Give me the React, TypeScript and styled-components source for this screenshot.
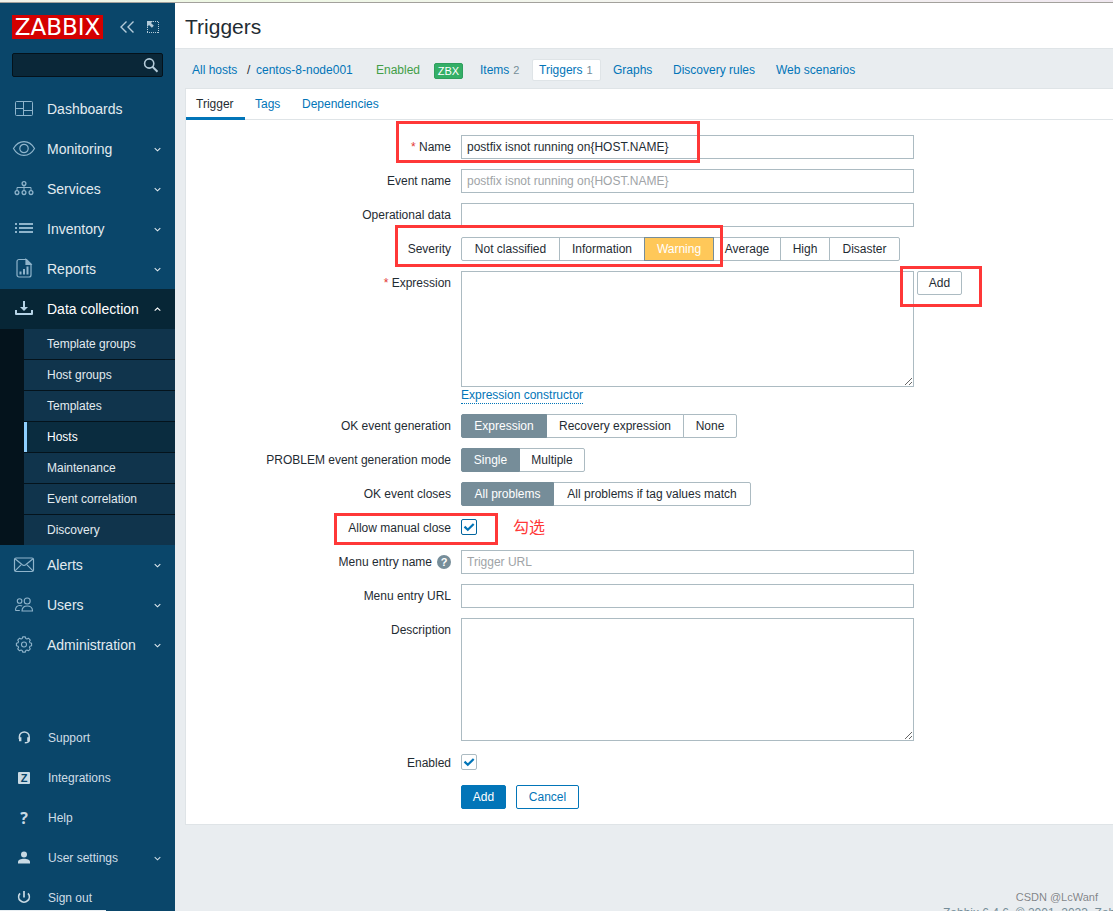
import React from "react";
import styled, { createGlobalStyle, css } from "styled-components";

const c = {
  sidebar: "#0a466a",
  sidebarText: "#e2ebf0",
  icon: "#8fb4cb",
  page: "#e9edf0",
  line: "#dfe4e7",
  border: "#acbbc2",
  text: "#1f2c33",
  link: "#0275b8",
  muted: "#768d99",
  mark: "#ff3838",
};

const GlobalStyle = createGlobalStyle`
  *, *::before, *::after { box-sizing: border-box; }
  body {
    margin: 0;
    background: ${c.page};
    color: ${c.text};
    font: 12px/16px "Liberation Sans", Arial, sans-serif;
  }
  button, input, textarea { font: inherit; color: inherit; }
  a { color: ${c.link}; text-decoration: none; }
`;

const Screen = styled.div`
  position: relative;
  height: 100vh;
  overflow: hidden;
  display: flex;
  flex-direction: column;
`;

const TopStrip = styled.div`
  flex: none;
  height: 3px;
  background: linear-gradient(90deg, #f2f2ea, #eef8e4 20%, #f4f4f0 60%, #f0e8f0);
  border-bottom: 1px solid #a3a19c;
`;

const Columns = styled.div`
  flex: 1;
  min-height: 0;
  display: flex;
`;

/* ---------- sidebar ---------- */

const Sidebar = styled.aside`
  flex: none;
  width: 175px;
  background: ${c.sidebar};
  color: ${c.sidebarText};
  overflow: hidden;
`;

const Brand = styled.div`
  display: flex;
  align-items: center;
  padding: 12px 12px 0;
`;

const Logo = styled.a`
  width: 91px;
  height: 24px;
  margin-right: 12px;
  background: #d40000;
  color: #fff;
  font: 23px/24px "DejaVu Sans", sans-serif;
  text-align: center;
`;

const IconButton = styled.button`
  display: flex;
  justify-content: center;
  width: 24px;
  padding: 0;
  border: 0;
  background: none;
  color: #b4cbd9;
`;

const SearchBox = styled.form`
  display: flex;
  align-items: center;
  height: 24px;
  margin: 14px 12px 12px;
  border: 1px solid #04121b;
  border-radius: 2px;
  background: #0a2738;
`;

const SearchInput = styled.input`
  flex: 1;
  min-width: 0;
  height: 22px;
  padding: 0 6px;
  border: 0;
  outline: 0;
  background: none;
`;

const Menu = styled.ul`
  margin: 0;
  padding: 0;
  list-style: none;
`;

const SupportMenu = styled(Menu)`
  margin-top: 53px;
`;

const MenuLink = styled.a<{ $open?: boolean; $small?: boolean }>`
  display: flex;
  align-items: center;
  gap: ${(p) => (p.$small ? 12 : 11)}px;
  height: 40px;
  padding: 0 14px 0 12px;
  color: ${(p) => (p.$small ? "#cfdde6" : c.sidebarText)};
  font-size: ${(p) => (p.$small ? 12 : 14)}px;
  ${(p) =>
    p.$open &&
    css`
      background: #072636;
      color: #fff;
    `}
`;

const MenuIcon = styled.span<{ $tone: string }>`
  display: flex;
  justify-content: center;
  width: 24px;
  color: ${(p) => p.$tone};
`;

const MenuText = styled.span`
  flex: 1;
  white-space: nowrap;
`;

const Submenu = styled.ul`
  margin: 0;
  padding: 0 0 0 24px;
  list-style: none;
  background: #04131c;
`;

const SubmenuItem = styled.li`
  & + & { border-top: 1px solid #04131c; }
`;

const SubmenuLink = styled.a<{ $current?: boolean }>`
  display: block;
  padding-left: 20px;
  border-left: 3px solid ${(p) => (p.$current ? "#8fd0ff" : "#10344c")};
  background: ${(p) => (p.$current ? "#0a2c3f" : "#10344c")};
  color: ${(p) => (p.$current ? "#fff" : c.sidebarText)};
  line-height: 30px;
`;

const ZBadge = styled.b`
  width: 12px;
  height: 12px;
  border-radius: 1px;
  background: #c9dae4;
  color: ${c.sidebar};
  font-size: 11px;
  line-height: 12px;
  text-align: center;
`;

const HelpMark = styled.b`
  font: bold 16px/16px "Open Sans", sans-serif;
`;

/* ---------- page ---------- */

const Main = styled.main`
  flex: 1;
  min-width: 0;
  overflow: hidden;
`;

const Header = styled.header`
  height: 46px;
  padding: 0 10px;
  background: #fff;
  border-bottom: 1px solid ${c.line};
`;

const Title = styled.h1`
  margin: 0;
  font-size: 21px;
  font-weight: normal;
  line-height: 48px;
`;

const Crumbs = styled.nav`
  display: grid;
  grid-template-columns: 55px 9px 120px 58px 46px 52px 81px 60px 103px auto;
  align-items: center;
  justify-content: start;
  height: 39px;
  padding: 3px 0 0 17px;
  white-space: nowrap;
`;

const Enabled = styled.a`
  color: #429e47;
`;

const Zbx = styled.span`
  width: 29px;
  height: 16px;
  margin-top: 2px;
  border: 1px solid #2f9f5e;
  border-radius: 2px;
  background: #34af67;
  color: #fff;
  font-size: 11px;
  line-height: 15px;
  text-align: center;
`;

const Count = styled.span`
  margin-left: 4px;
  color: ${c.muted};
  font-size: 11px;
`;

const CurrentCrumb = styled.a`
  justify-self: start;
  width: 69px;
  padding: 2px 0 2px 6px;
  border: 1px solid ${c.line};
  border-radius: 2px;
  background: #fff;
`;

const Panel = styled.section`
  margin-left: 10px;
  border: 1px solid ${c.line};
  border-right: 0;
  background: #fff;
`;

const Tabs = styled.nav`
  display: flex;
  height: 31px;
  border-bottom: 1px solid ${c.line};
`;

const Tab = styled.a<{ $width: number; $active?: boolean }>`
  width: ${(p) => p.$width}px;
  height: 31px;
  padding: 0 10px;
  line-height: 30px;
  ${(p) =>
    p.$active &&
    css`
      border-bottom: 3px solid ${c.link};
      color: ${c.text};
    `}
`;

const Form = styled.form`
  display: flex;
  flex-direction: column;
  gap: 10px;
  padding: 15px 0;
`;

const Row = styled.div`
  position: relative;
  display: grid;
  grid-template-columns: 265px minmax(0, 1fr);
  column-gap: 10px;
`;

const labelText = css`
  line-height: 24px;
  text-align: right;
`;

const Label = styled.label`
  ${labelText}
`;

const GroupLabel = styled.span`
  ${labelText}
`;

const Required = styled.span`
  color: #e33734;
`;

const Field = styled.div`
  display: flex;
  min-height: 24px;
`;

const StackedField = styled.div`
  display: flex;
  flex-direction: column;
  align-items: flex-start;
`;

const fieldBox = css`
  display: block;
  width: 453px;
  max-width: 100%;
  border: 1px solid ${c.border};
  border-radius: 0;
  background: #fff;
  outline: 0;
  &::placeholder { color: #a0a4a7; opacity: 1; }
`;

const TextInput = styled.input`
  ${fieldBox}
  height: 24px;
  padding: 0 5px;
`;

const TextArea = styled.textarea<{ $height: number }>`
  ${fieldBox}
  height: ${(p) => p.$height}px;
  padding: 4px 5px;
`;

const AreaLine = styled.div`
  display: flex;
  align-items: flex-start;
  gap: 3px;
`;

const DottedLink = styled.a`
  height: 17px;
  border-bottom: 1px dotted ${c.link};
`;

const Segments = styled.div`
  display: flex;
`;

const Segment = styled.label<{ $width: number; $tone?: string }>`
  position: relative;
  width: ${(p) => p.$width}px;
  height: 24px;
  border: 1px solid ${c.border};
  background: #fff;
  line-height: 22px;
  text-align: center;
  white-space: nowrap;
  & + & { margin-left: -1px; }
  &:first-child { border-radius: 2px 0 0 2px; }
  &:last-child { border-radius: 0 2px 2px 0; }
  &:has(input:checked) {
    z-index: 1;
    border-color: ${c.muted};
    background: ${(p) => p.$tone ?? c.muted};
    color: #fff;
  }
`;

const HiddenRadio = styled.input`
  position: absolute;
  inset: 0;
  margin: 0;
  opacity: 0;
`;

const CheckWrap = styled.span`
  display: grid;
  width: 16px;
  height: 16px;
  margin-top: 3px;
  & > * { grid-area: 1 / 1; }
  & > svg { pointer-events: none; }
`;

const Check = styled.input<{ $focused?: boolean }>`
  appearance: none;
  width: 16px;
  height: 16px;
  margin: 0;
  border: 1px solid ${(p) => (p.$focused ? "#02659f" : c.border)};
  border-radius: 2px;
  background: #fff;
`;

const Button = styled.button<{ $kind?: "primary" | "outline"; $width: number }>`
  width: ${(p) => p.$width}px;
  height: 24px;
  padding: 0;
  border: 1px solid ${(p) => (p.$kind ? c.link : c.border)};
  border-radius: 2px;
  background: ${(p) => (p.$kind === "primary" ? c.link : "#fff")};
  color: ${(p) =>
    p.$kind === "primary" ? "#fff" : p.$kind === "outline" ? c.link : c.text};
`;

const Actions = styled.div`
  display: flex;
  gap: 10px;
`;

const Hint = styled.button`
  width: 14px;
  height: 14px;
  margin-left: 5px;
  padding: 0;
  border: 0;
  border-radius: 50%;
  background: ${c.muted};
  color: #fff;
  font-size: 11px;
  font-weight: bold;
  line-height: 14px;
  text-align: center;
`;

/* Red highlight frames drawn over the form rows. */
const Mark = styled.div<{ $left: number; $top: number; $w: number; $h: number }>`
  position: absolute;
  z-index: 2;
  left: ${(p) => p.$left}px;
  top: ${(p) => p.$top}px;
  width: ${(p) => p.$w}px;
  height: ${(p) => p.$h}px;
  border: 3px solid ${c.mark};
  pointer-events: none;
`;

const Note = styled.span`
  margin-left: 36px;
  color: ${c.mark};
  font: 16px/20px "Noto Sans CJK SC", sans-serif;
`;

const Footer = styled.footer`
  padding: 80px 0 0 768px;
  color: ${c.muted};
  white-space: nowrap;
`;

const Watermark = styled.div`
  position: absolute;
  right: 15px;
  bottom: 6px;
  color: #808488;
  font-size: 11px;
  text-shadow: 0 0 1px #fff;
`;

const StatusEdge = styled.div`
  position: absolute;
  left: 0;
  bottom: 0;
  width: 106px;
  height: 1px;
  background: #e8eef2;
`;

/* ---------- icons ---------- */

type IconProps = { children: React.ReactNode; fill?: boolean; width?: number };

const Icon = ({ children, fill, width = 1 }: IconProps) => (
  <svg
    width="24"
    height="24"
    viewBox="0 0 24 24"
    fill={fill ? "currentColor" : "none"}
    stroke={fill ? "none" : "currentColor"}
    strokeWidth={width}
    aria-hidden="true"
  >
    {children}
  </svg>
);

const gearPath = (() => {
  const points: string[] = [];
  const at = (r: number, deg: number) => {
    const a = (deg * Math.PI) / 180;
    return `${(12 + r * Math.cos(a)).toFixed(2)} ${(11.5 + r * Math.sin(a)).toFixed(2)}`;
  };
  for (let i = 0; i < 8; i++) {
    const a = i * 45;
    points.push(`${i ? "L" : "M"}${at(6.2, a - 17)}`);
    points.push(`L${at(7.7, a - 10)}`, `L${at(7.7, a + 10)}`, `L${at(6.2, a + 17)}`);
  }
  return points.join("") + "Z";
})();

const icons = {
  dashboards: (
    <Icon>
      <rect x="3.5" y="4.5" width="17" height="14" rx="1" />
      <path d="M11.5 4.5v14M3.5 11.5h8M11.5 13.5h9" />
    </Icon>
  ),
  monitoring: (
    <Icon width={1.2}>
      <path d="M1.5 11.5C4 7 7.6 4.6 12 4.6S20 7 22.5 11.5C20 16 16.4 18.4 12 18.4S4 16 1.5 11.5Z" />
      <circle cx="12" cy="11.5" r="4.2" />
    </Icon>
  ),
  services: (
    <Icon width={1.3}>
      <circle cx="12" cy="6.5" r="1.9" />
      <circle cx="5" cy="15.6" r="1.9" />
      <circle cx="12" cy="15.6" r="1.9" />
      <circle cx="19" cy="15.6" r="1.9" />
      <path d="M12 8.4v5.3M5 13.7v-3.2h14v3.2" strokeWidth="1" />
    </Icon>
  ),
  inventory: (
    <Icon fill>
      <path d="M3 6h2v2H3zM7 6h14v2H7zM3 10h2v2H3zM7 10h14v2H7zM3 14h2v2H3zM7 14h14v2H7z" />
    </Icon>
  ),
  reports: (
    <Icon width={1.2}>
      <path d="M7 2.5h7.5l4.500 4.500v11a2 2 0 0 1-2 2H7a2 2 0 0 1-2-2V4.500a2 2 0 0 1 2-2Z" />
      <path d="M14 2.5V7.500h5Z" fill="currentColor" />
      <path d="M8.500 14.500v3M12 12v5.500M15.500 9.500v8" strokeWidth="2" />
    </Icon>
  ),
  data: (
    <Icon fill>
      <path d="M11 4h2v6h3l-4 4-4-4h3zM3 13h2v3h14v-3h2v4a1 1 0 0 1-1 1H4a1 1 0 0 1-1-1z" />
    </Icon>
  ),
  alerts: (
    <Icon width={1.2}>
      <rect x="2.5" y="5" width="19" height="13.5" rx="1.5" />
      <path d="M3 5.8l7.3 6q1.7 1.3 3.4 0l7.3-6M3 17.8l6-6M21 17.8l-6-6" />
    </Icon>
  ),
  users: (
    <Icon width={1.1}>
      <circle cx="15.2" cy="8" r="3" />
      <path d="M10 18c0-3.4 2-5 5.2-5s5.3 1.6 5.3 5z" />
      <circle cx="7.6" cy="8" r="2.3" />
      <path d="M3.5 17.5c0-3.2 1.2-5 4.3-5 1 0 1.7.2 2.4.6M3.5 17.5h4.3" />
    </Icon>
  ),
  administration: (
    <Icon width={1.1}>
      <path d={gearPath} strokeLinejoin="round" />
      <circle cx="12" cy="11.5" r="2.5" />
    </Icon>
  ),
  support: (
    <Icon width={1.5}>
      <path d="M7.4 13v-2.200a4.900 4.900 0 0 1 9.800 0V14q0 2.700-4.400 2.800" />
      <path d="M8.200 11.200v4M16.400 11.200v4" strokeWidth="2.4" />
    </Icon>
  ),
  user: (
    <Icon fill>
      <circle cx="12" cy="8.5" r="3" />
      <path d="M6 17.5v-1.500c0-2 3-3.200 6-3.200s6 1.200 6 3.200v1.500z" />
    </Icon>
  ),
  power: (
    <Icon width={1.7}>
      <path d="M12 5v6.500M8 7.400a5.300 5.300 0 1 0 8 0" />
    </Icon>
  ),
};

const Chevron = ({ up }: { up?: boolean }) => (
  <svg width="7" height="6" viewBox="0 0 7 6" fill="none" stroke="currentColor" strokeWidth="1.1" aria-hidden="true">
    <path d={up ? "M.7 4.7l2.800-2.600L6.300 4.700" : "M.7 2.200l2.800 2.600L6.300 2.200"} />
  </svg>
);

const CheckMark = () => (
  <svg width="16" height="16" viewBox="0 0 16 16" fill="none" stroke={c.link} strokeWidth="2.2" aria-hidden="true">
    <path d="M3.500 7.600l3.300 3.200 5.900-5.800" />
  </svg>
);

/* ---------- data ---------- */

type Item = { label: string; icon: React.ReactNode; plain?: boolean };

const before: Item[] = [
  { label: "Dashboards", icon: icons.dashboards, plain: true },
  { label: "Monitoring", icon: icons.monitoring },
  { label: "Services", icon: icons.services },
  { label: "Inventory", icon: icons.inventory },
  { label: "Reports", icon: icons.reports },
];

const collection = [
  "Template groups",
  "Host groups",
  "Templates",
  "Hosts",
  "Maintenance",
  "Event correlation",
  "Discovery",
];

const after: Item[] = [
  { label: "Alerts", icon: icons.alerts },
  { label: "Users", icon: icons.users },
  { label: "Administration", icon: icons.administration },
];

const support: Item[] = [
  { label: "Support", icon: icons.support, plain: true },
  { label: "Integrations", icon: <ZBadge>Z</ZBadge>, plain: true },
  { label: "Help", icon: <HelpMark>?</HelpMark>, plain: true },
  { label: "User settings", icon: icons.user },
  { label: "Sign out", icon: icons.power, plain: true },
];

type Option = { label: string; width: number; tone?: string };

const severities: Option[] = [
  { label: "Not classified", width: 99 },
  { label: "Information", width: 86 },
  { label: "Warning", width: 70, tone: "#ffc859" },
  { label: "Average", width: 68 },
  { label: "High", width: 50 },
  { label: "Disaster", width: 71 },
];

/* ---------- components ---------- */

const MenuEntry = ({ item, small }: { item: Item; small?: boolean }) => (
  <li>
    <MenuLink href="#" $small={small}>
      <MenuIcon $tone={small ? "#c9dae4" : c.icon}>{item.icon}</MenuIcon>
      <MenuText>{item.label}</MenuText>
      {!item.plain && <Chevron />}
    </MenuLink>
  </li>
);

const RadioGroup = ({ name, options, selected }: { name: string; options: Option[]; selected: string }) => (
  <Segments role="radiogroup" aria-label={name}>
    {options.map((o) => (
      <Segment key={o.label} $width={o.width} $tone={o.tone}>
        <HiddenRadio type="radio" name={name} defaultChecked={o.label === selected} />
        {o.label}
      </Segment>
    ))}
  </Segments>
);

const CheckBox = ({ id, focused }: { id: string; focused?: boolean }) => (
  <CheckWrap>
    <Check type="checkbox" id={id} defaultChecked $focused={focused} />
    <CheckMark />
  </CheckWrap>
);

export default function App() {
  return (
    <Screen>
      <GlobalStyle />
      <TopStrip />
      <Columns>
        <Sidebar>
          <Brand>
            <Logo href="#">ZABBIX</Logo>
            <IconButton type="button" aria-label="Collapse sidebar">
              <svg width="24" height="24" viewBox="0 0 24 24" fill="none" stroke="currentColor" strokeWidth="1.4">
                <path d="M11.500 6.500L6 12l5.500 5.500M18.500 6.500L13 12l5.500 5.500" />
              </svg>
            </IconButton>
            <IconButton type="button" aria-label="Hide sidebar">
              <svg width="24" height="24" viewBox="0 0 24 24" fill="none" stroke="currentColor">
                <path d="M14 6.500h6M19.500 7v11M8.500 12v6M8 17.500h12" strokeDasharray="1 1" />
                <path d="M8 6h6l-2 2 2.800 2.800-1.900 1.900L10 10l-2 2z" fill="currentColor" stroke="none" />
              </svg>
            </IconButton>
          </Brand>
          <SearchBox role="search">
            <SearchInput type="text" aria-label="Search" />
            <IconButton type="button" aria-label="Search">
              <svg width="18" height="18" viewBox="0 0 18 18" fill="none" stroke="currentColor" strokeWidth="1.6">
                <circle cx="8.2" cy="7.5" r="4.6" />
                <path d="M11.500 10.800l5 5" strokeWidth="2" />
              </svg>
            </IconButton>
          </SearchBox>
          <Menu>
            {before.map((i) => (
              <MenuEntry key={i.label} item={i} />
            ))}
            <li>
              <MenuLink href="#" $open>
                <MenuIcon $tone="#b5d3e6">{icons.data}</MenuIcon>
                <MenuText>Data collection</MenuText>
                <Chevron up />
              </MenuLink>
              <Submenu>
                {collection.map((label) => (
                  <SubmenuItem key={label}>
                    <SubmenuLink href="#" $current={label === "Hosts"}>
                      {label}
                    </SubmenuLink>
                  </SubmenuItem>
                ))}
              </Submenu>
            </li>
            {after.map((i) => (
              <MenuEntry key={i.label} item={i} />
            ))}
          </Menu>
          <SupportMenu>
            {support.map((i) => (
              <MenuEntry key={i.label} item={i} small />
            ))}
          </SupportMenu>
        </Sidebar>

        <Main>
          <Header>
            <Title>Triggers</Title>
          </Header>
          <Crumbs>
            <a href="#">All hosts</a>
            <span>/</span>
            <a href="#">centos-8-node001</a>
            <Enabled href="#">Enabled</Enabled>
            <Zbx>ZBX</Zbx>
            <a href="#">
              Items<Count>2</Count>
            </a>
            <CurrentCrumb href="#">
              Triggers<Count>1</Count>
            </CurrentCrumb>
            <a href="#">Graphs</a>
            <a href="#">Discovery rules</a>
            <a href="#">Web scenarios</a>
          </Crumbs>
          <Panel>
            <Tabs>
              <Tab href="#" $width={59} $active>
                Trigger
              </Tab>
              <Tab href="#" $width={47}>
                Tags
              </Tab>
              <Tab href="#" $width={101}>
                Dependencies
              </Tab>
            </Tabs>
            <Form>
              <Row>
                <Label htmlFor="name">
                  <Required>*</Required> Name
                </Label>
                <Field>
                  <TextInput id="name" defaultValue="postfix isnot running on{HOST.NAME}" />
                </Field>
                <Mark $left={210} $top={-14} $w={304} $h={42} />
              </Row>
              <Row>
                <Label htmlFor="event">Event name</Label>
                <Field>
                  <TextInput id="event" placeholder="postfix isnot running on{HOST.NAME}" />
                </Field>
              </Row>
              <Row>
                <Label htmlFor="opdata">Operational data</Label>
                <Field>
                  <TextInput id="opdata" />
                </Field>
              </Row>
              <Row>
                <GroupLabel>Severity</GroupLabel>
                <RadioGroup name="Severity" options={severities} selected="Warning" />
                <Mark $left={209} $top={-12} $w={328} $h={42} />
              </Row>
              <Row>
                <Label htmlFor="expression">
                  <Required>*</Required> Expression
                </Label>
                <StackedField>
                  <AreaLine>
                    <TextArea id="expression" $height={116} />
                    <Button type="button" $width={45}>
                      Add
                    </Button>
                  </AreaLine>
                  <DottedLink href="#">Expression constructor</DottedLink>
                </StackedField>
                <Mark $left={714} $top={-5} $w={82} $h={41} />
              </Row>
              <Row>
                <GroupLabel>OK event generation</GroupLabel>
                <RadioGroup
                  name="OK event generation"
                  selected="Expression"
                  options={[
                    { label: "Expression", width: 86 },
                    { label: "Recovery expression", width: 138 },
                    { label: "None", width: 54 },
                  ]}
                />
              </Row>
              <Row>
                <GroupLabel>PROBLEM event generation mode</GroupLabel>
                <RadioGroup
                  name="PROBLEM event generation mode"
                  selected="Single"
                  options={[
                    { label: "Single", width: 59 },
                    { label: "Multiple", width: 66 },
                  ]}
                />
              </Row>
              <Row>
                <GroupLabel>OK event closes</GroupLabel>
                <RadioGroup
                  name="OK event closes"
                  selected="All problems"
                  options={[
                    { label: "All problems", width: 93 },
                    { label: "All problems if tag values match", width: 198 },
                  ]}
                />
              </Row>
              <Row>
                <Label htmlFor="manual">Allow manual close</Label>
                <Field>
                  <CheckBox id="manual" focused />
                  <Note lang="zh">勾选</Note>
                </Field>
                <Mark $left={148} $top={-3} $w={164} $h={32} />
              </Row>
              <Row>
                <GroupLabel>
                  <label htmlFor="menu-name">Menu entry name</label>
                  <Hint type="button">?</Hint>
                </GroupLabel>
                <Field>
                  <TextInput id="menu-name" placeholder="Trigger URL" />
                </Field>
              </Row>
              <Row>
                <Label htmlFor="menu-url">Menu entry URL</Label>
                <Field>
                  <TextInput id="menu-url" />
                </Field>
              </Row>
              <Row>
                <Label htmlFor="description">Description</Label>
                <Field>
                  <TextArea id="description" $height={123} />
                </Field>
              </Row>
              <Row>
                <Label htmlFor="enabled">Enabled</Label>
                <Field>
                  <CheckBox id="enabled" />
                </Field>
              </Row>
              <Row>
                <span />
                <Actions>
                  <Button type="button" $kind="primary" $width={45}>
                    Add
                  </Button>
                  <Button type="button" $kind="outline" $width={63}>
                    Cancel
                  </Button>
                </Actions>
              </Row>
            </Form>
          </Panel>
          <Footer>Zabbix 6.4.6. © 2001–2023, Zabbix SIA</Footer>
        </Main>
      </Columns>
      <StatusEdge />
      <Watermark>CSDN @LcWanf</Watermark>
    </Screen>
  );
}
